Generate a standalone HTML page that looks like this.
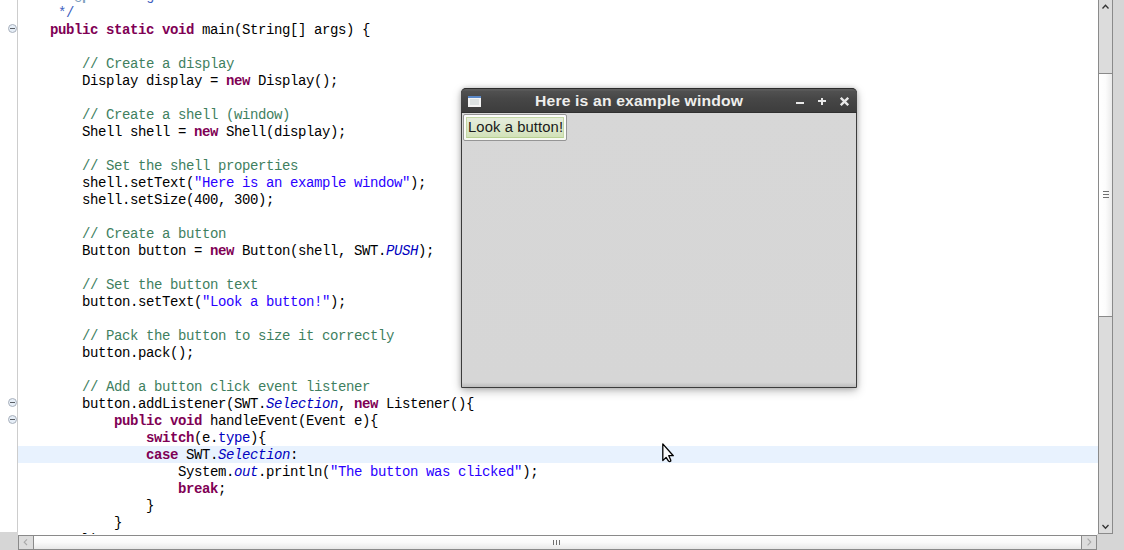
<!DOCTYPE html>
<html><head><meta charset="utf-8">
<style>
html,body{margin:0;padding:0;}
body{width:1124px;height:550px;position:relative;overflow:hidden;background:#fff;}
#gutter{position:absolute;left:0;top:0;width:17px;height:532px;background:#fff;}
#gline{position:absolute;left:17px;top:0;width:1px;height:532px;background:#cdcdcd;}
#corner{position:absolute;left:0;top:532px;width:18px;height:18px;background:#d6d6d6;}
#rightgray{position:absolute;left:1113px;top:0;width:11px;height:550px;background:#d6d6d6;}
#brgray{position:absolute;left:1097px;top:534px;width:16px;height:16px;background:#d6d6d6;}
#editor{position:absolute;left:18px;top:0;width:1080px;height:534px;overflow:hidden;background:#fff;}
#hl{position:absolute;left:0;top:446px;width:1080px;height:17px;background:#e8f2fe;}
.ln{position:absolute;left:0;height:17px;line-height:17px;white-space:pre;font-family:"Liberation Mono",monospace;font-size:14px;letter-spacing:-0.4px;color:#000;}
.k{color:#7f0055;font-weight:bold;}
.c{color:#3f7f5f;}
.jd{color:#3f5fbf;}
.jt{color:#7f9fbf;font-weight:bold;}
.s{color:#2a00ff;}
.sf{color:#0000c0;font-style:italic;}
.f{color:#0000c0;}
.fold{position:absolute;left:8px;width:9px;height:9px;box-sizing:border-box;border:1px solid #a9b1bc;border-radius:50%;background:#e6eef7;}
.fold i{position:absolute;left:1px;top:3px;width:5px;height:1px;background:#5a5e64;}
/* vertical scrollbar */
#vsb{position:absolute;left:1098px;top:0;width:15px;height:534px;box-sizing:border-box;border:1px solid #8a8a8a;border-top:none;background:#dcdcdc;}
#vthumb{position:absolute;left:0;top:73px;width:13px;height:244px;box-sizing:border-box;border-top:1px solid #8a8a8a;border-bottom:1px solid #8a8a8a;background:linear-gradient(to right,#fff,#fcfcfc 50%,#ebebeb);}
.grip{position:absolute;background:#707070;}
/* horizontal scrollbar */
#hsb{position:absolute;left:18px;top:535px;width:1079px;height:15px;box-sizing:border-box;border:1px solid #8a8a8a;background:linear-gradient(#fff,#fafafa 50%,#e8e8e8);}
#hl_btn{position:absolute;left:0;top:0;width:15px;height:13px;box-sizing:border-box;border-right:1px solid #8a8a8a;background:#dcdcdc;}
#hr_btn{position:absolute;right:0;top:0;width:15px;height:13px;box-sizing:border-box;border-left:1px solid #8a8a8a;background:#dcdcdc;}
svg.ar{position:absolute;left:0;top:0;}
/* window */
#win{position:absolute;left:461px;top:88px;width:396px;height:300px;box-sizing:border-box;border-radius:5px 5px 0 0;box-shadow:0 3px 10px rgba(0,0,0,0.26),0 0 5px rgba(0,0,0,0.2);background:linear-gradient(#dadada,#d7d7d7 3%,#d6d6d6 98.4%,#bcbcbc);border:1px solid #3c3c3c;}
#title{position:absolute;left:-1px;top:-1px;width:396px;height:25px;box-sizing:border-box;border-top:1px solid #2c2c2c;border-bottom:1px solid #303030;background:linear-gradient(#5e5e5e,#5e5e5e 1px,#515151 2px,#474747 40%,#3d3d3d);border-radius:5px 5px 0 0;}
#ttext{position:absolute;left:74px;top:0px;white-space:nowrap;font-family:"Liberation Sans",sans-serif;font-weight:bold;font-size:14px;letter-spacing:0.15px;line-height:25px;color:#eeeeec;transform:scaleX(1.12);transform-origin:0 0;}
#ticon{position:absolute;left:7px;top:7px;width:13px;height:11px;box-sizing:border-box;background:#f4f4f4;border-top:2px solid #5a88c8;}
#ticon i{position:absolute;left:2px;top:1px;width:9px;height:6px;background:#dde2e2;}
.tb{position:absolute;background:#e8e8e8;}
#btn{position:absolute;left:1px;top:25px;width:104px;height:27px;box-sizing:border-box;border:1px solid #959595;border-radius:2px;background:linear-gradient(#fdfdfd,#f7faf2);}
#btn b{position:absolute;left:2px;top:2px;right:2px;bottom:2px;border:1px solid #c4d9a6;border-bottom-color:#b9d193;background:linear-gradient(#e6ecdc,#dde8cc 55%,#d2e2b8);}
#btext{position:absolute;left:4px;top:0;white-space:nowrap;font-family:"Liberation Sans",sans-serif;font-size:14px;letter-spacing:0.1px;line-height:25px;color:#1a1a1a;transform:scaleX(1.055);transform-origin:0 0;}
</style></head><body>
<div id="editor">
<div id="hl"></div>
<div class="ln" style="top:-12px"><span class="jd">     * </span><span class="jt">@param</span><span class="jd"> args</span></div>
<div class="ln" style="top:5px"><span class="jd">     */</span></div>
<div class="ln" style="top:22px">    <span class="k">public</span> <span class="k">static</span> <span class="k">void</span> main(String[] args) {</div>
<div class="ln" style="top:39px"></div>
<div class="ln" style="top:56px">        <span class="c">// Create a display</span></div>
<div class="ln" style="top:73px">        Display display = <span class="k">new</span> Display();</div>
<div class="ln" style="top:90px"></div>
<div class="ln" style="top:107px">        <span class="c">// Create a shell (window)</span></div>
<div class="ln" style="top:124px">        Shell shell = <span class="k">new</span> Shell(display);</div>
<div class="ln" style="top:141px"></div>
<div class="ln" style="top:158px">        <span class="c">// Set the shell properties</span></div>
<div class="ln" style="top:175px">        shell.setText(<span class="s">&quot;Here is an example window&quot;</span>);</div>
<div class="ln" style="top:192px">        shell.setSize(400, 300);</div>
<div class="ln" style="top:209px"></div>
<div class="ln" style="top:226px">        <span class="c">// Create a button</span></div>
<div class="ln" style="top:243px">        Button button = <span class="k">new</span> Button(shell, SWT.<span class="sf">PUSH</span>);</div>
<div class="ln" style="top:260px"></div>
<div class="ln" style="top:277px">        <span class="c">// Set the button text</span></div>
<div class="ln" style="top:294px">        button.setText(<span class="s">&quot;Look a button!&quot;</span>);</div>
<div class="ln" style="top:311px"></div>
<div class="ln" style="top:328px">        <span class="c">// Pack the button to size it correctly</span></div>
<div class="ln" style="top:345px">        button.pack();</div>
<div class="ln" style="top:362px"></div>
<div class="ln" style="top:379px">        <span class="c">// Add a button click event listener</span></div>
<div class="ln" style="top:396px">        button.addListener(SWT.<span class="sf">Selection</span>, <span class="k">new</span> Listener(){</div>
<div class="ln" style="top:413px">            <span class="k">public</span> <span class="k">void</span> handleEvent(Event e){</div>
<div class="ln" style="top:430px">                <span class="k">switch</span>(e.<span class="f">type</span>){</div>
<div class="ln" style="top:447px">                <span class="k">case</span> SWT.<span class="sf">Selection</span>:</div>
<div class="ln" style="top:464px">                    System.<span class="sf">out</span>.println(<span class="s">&quot;The button was clicked&quot;</span>);</div>
<div class="ln" style="top:481px">                    <span class="k">break</span>;</div>
<div class="ln" style="top:498px">                }</div>
<div class="ln" style="top:515px">            }</div>
<div class="ln" style="top:532px">        });</div>
</div>
<div id="gutter"><div class="fold" style="top:24px"><i></i></div><div class="fold" style="top:398px"><i></i></div><div class="fold" style="top:415px"><i></i></div></div>
<div id="gline"></div>
<div id="corner"></div>
<div id="rightgray"></div>
<div id="brgray"></div>
<div id="vsb"><div id="vthumb"><div class="grip" style="left:4px;top:117px;width:6px;height:1px"></div><div class="grip" style="left:4px;top:120px;width:6px;height:1px"></div><div class="grip" style="left:4px;top:123px;width:6px;height:1px"></div></div></div>
<div id="hsb"><div id="hl_btn"></div><div id="hr_btn"></div>
<div class="grip" style="left:534px;top:4px;width:1px;height:5px"></div><div class="grip" style="left:537px;top:4px;width:1px;height:5px"></div><div class="grip" style="left:540px;top:4px;width:1px;height:5px"></div>
</div>
<svg class="ar" width="1124" height="550" style="position:absolute;left:0;top:0;pointer-events:none">
<path d="M1102.5 8.5L1105.5 5.3L1108.5 8.5" fill="none" stroke="#333" stroke-width="1.3"/>
<path d="M662.8 443.9L662.8 460.6L666.1 457.4L668.5 461.1Q669.6 462 670.8 461.1L670.7 460.1L668.8 455.7L673.3 455.7Z" fill="#fafafa" stroke="#000" stroke-width="1.3" stroke-linejoin="round"/>
<path d="M1102.5 525L1105.5 528.2L1108.5 525" fill="none" stroke="#333" stroke-width="1.3"/>
<path d="M27 539.3L24.2 542.2L27 545" fill="none" stroke="#a8a8a8" stroke-width="1.1"/>
<path d="M1087.6 538.6L1090.8 542L1087.6 545.4" fill="none" stroke="#a8a8a8" stroke-width="1.1"/>
</svg>
<div id="win">
<div id="title"><div id="ticon"><i></i></div><div id="ttext">Here is an example window</div>
<div class="tb" style="left:335px;top:13px;width:8px;height:2px"></div>
<div class="tb" style="left:357px;top:11px;width:8px;height:2px"></div>
<div class="tb" style="left:360px;top:9px;width:2px;height:7px"></div>
<svg style="position:absolute;left:379px;top:8px" width="9" height="9" viewBox="0 0 9 9"><path d="M0.8 0.8L8.2 8.2M8.2 0.8L0.8 8.2" stroke="#e8e8e8" stroke-width="2.3"/></svg>
</div>
<div id="btn"><b></b><div id="btext">Look a button!</div></div>
</div>
</body></html>
